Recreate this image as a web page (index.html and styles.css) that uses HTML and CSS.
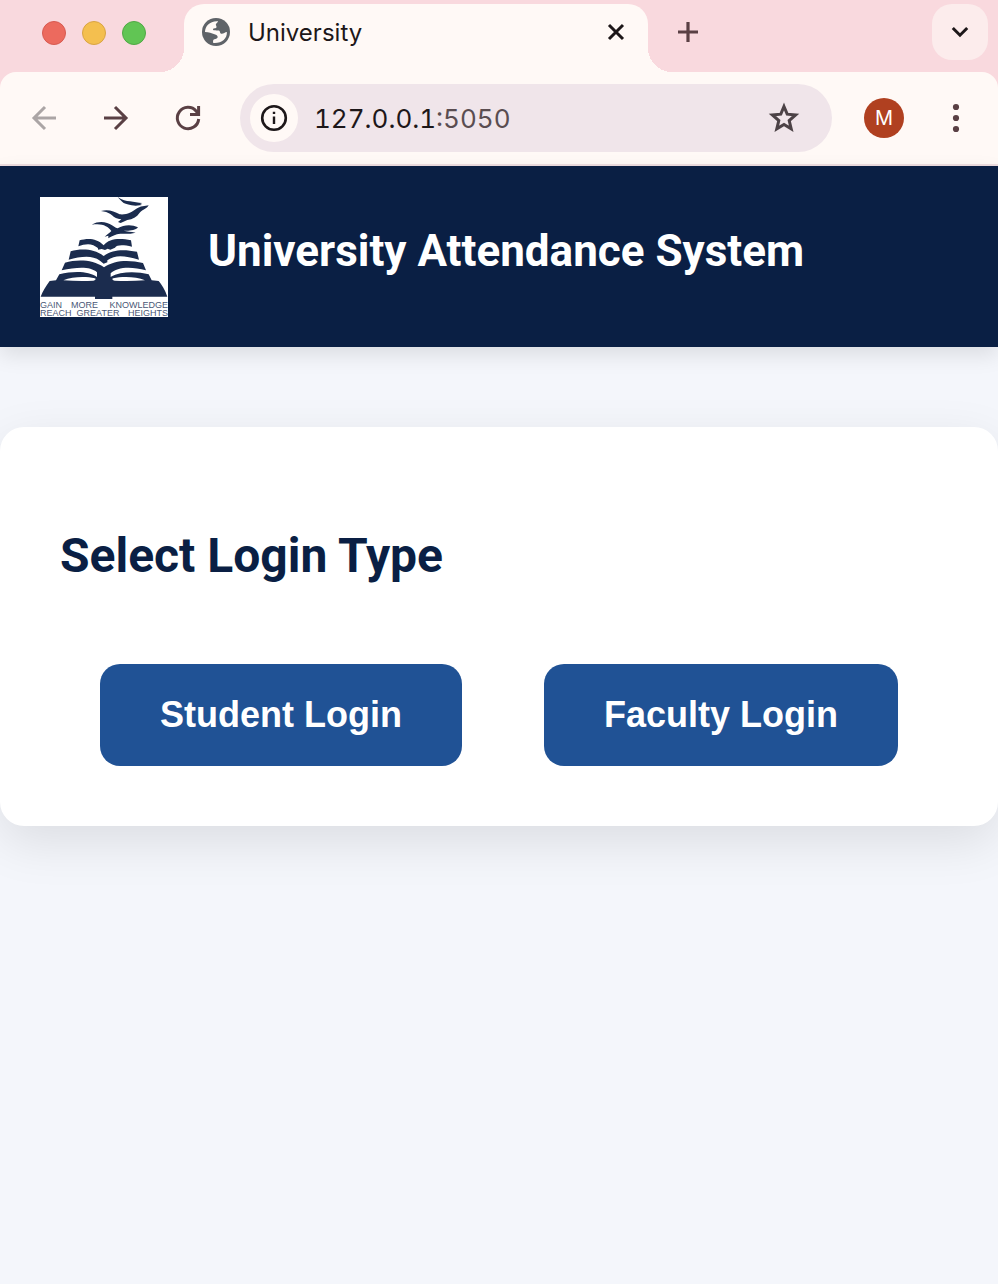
FILE: index.html
```html
<!DOCTYPE html>
<html lang="en">
<head>
<meta charset="utf-8">
<title>University</title>
<meta name="viewport" content="width=device-width, initial-scale=1">
<link rel="stylesheet" href="styles.css">
</head>
<body>
<div class="browser">
  <div class="tab-strip">
    <div class="lights"><span class="light light-close"></span><span class="light light-min"></span><span class="light light-max"></span></div>
    <div class="tab">
      <svg class="globe" viewBox="0 0 28 28" aria-hidden="true"><circle cx="14" cy="14" r="14" fill="#5f6368"/><path fill="#fff9f6" d="M15.500 3.200C17 3.300 15 4.500 14 6c-.7 1.200.8 1.700.5 3.200-.3 1.500-3.500.5-3.500 2.200 0 1.300 4.600.6 5.800 1.100 1.800.7.700 2.700 2.400 3.200 1.800.6 3.600-1.500 5.700-1.700C25.300 20.800 19.500 25.600 11.300 25c-.5-1.200-.2-2.700.2-3.300.8-1.200 3.200-.4 4-2 .8-1.800-1.200-3-3-3.500-3-.8-5.500-2.200-9.500-2.200C3 8 8 2.800 15.500 3.200z"/></svg>
      <span class="tab-title">University</span>
      <button class="plain" aria-label="Close tab"><svg class="icon" viewBox="0 0 32 32"><path d="M9 9 23 23M23 9 9 23" stroke="#1d1719" stroke-width="3"/></svg></button>
    </div>
    <button class="plain new-tab" aria-label="New tab"><svg class="icon" viewBox="0 0 32 32"><path d="M16 6V26M6 16H26" stroke="#5a4044" stroke-width="3.200"/></svg></button>
    <button class="plain tab-search" aria-label="Search tabs"><svg class="icon" viewBox="0 0 32 32"><path d="m8.800 12 7.200 7.200 7.200-7.200" fill="none" stroke="#1d1719" stroke-width="3"/></svg></button>
  </div>
  <div class="toolbar">
    <button class="plain" aria-label="Back"><svg class="icon" viewBox="0 0 32 32"><path d="M28 16H6M17 5 6 16 17 27" fill="none" stroke="#aba5a5" stroke-width="3"/></svg></button>
    <button class="plain" aria-label="Forward"><svg class="icon" viewBox="0 0 32 32"><path d="M4 16H26M15 5 26 16 15 27" fill="none" stroke="#5a4044" stroke-width="3"/></svg></button>
    <button class="plain" aria-label="Reload"><svg class="icon" viewBox="0 0 32 32"><path d="M26.700 17A10.700 10.700 0 1 1 24.300 9.200L26.500 12M26.600 4V12.500H18" fill="none" stroke="#5a4044" stroke-width="3"/></svg></button>
    <div class="omnibox">
      <button class="plain site-info" aria-label="Site information"><svg class="icon" viewBox="0 0 32 32"><circle cx="16" cy="16" r="11.800" fill="none" stroke="#1d1719" stroke-width="2.600"/><path d="M16 14.500V22M16 9.700V12" stroke="#1d1719" stroke-width="2.400"/></svg></button>
      <span class="url">127.0.0.1<span class="port">:5050</span></span>
      <button class="plain" aria-label="Bookmark"><svg class="icon" viewBox="0 0 32 32"><path d="M16 4.500 19.200 12.200 27.600 12.900 21.200 18.500 23.200 26.800 16 22.400 8.800 26.800 10.800 18.500 4.400 12.900 12.800 12.200Z" fill="none" stroke="#4c4246" stroke-width="3"/></svg></button>
    </div>
    <button class="plain avatar" aria-label="Profile">M</button>
    <button class="plain" aria-label="Menu"><svg class="icon" viewBox="0 0 32 32" fill="#5a4044"><circle cx="16" cy="5" r="3.100"/><circle cx="16" cy="16" r="3.100"/><circle cx="16" cy="27" r="3.100"/></svg></button>
  </div>
</div>
<header class="site-header">
  <svg class="logo" viewBox="0 0 128 120" role="img" aria-label="Gain more knowledge, reach greater heights">
    <rect width="128" height="120" fill="#fff"/>
    <g transform="scale(.33333)" fill="#1b2c4e">
      <path d="M233 0C247 9 258 13 270 13C282 14 294 18 307 18L300 21L306 24L287 26C269 25 258 20 251 18C245 13 239 8 233 0Z"/>
      <path d="M183 42C205 36 222 43 239 52C261 54 275 46 288 36C301 27 315 27 326 25C320 36 309 37 299 47C290 60 278 67 262 69L242 78L234 75L244 67C226 65 219 57 211 51C204 46 194 43 183 42Z"/>
      <path d="M155 83C178 70 201 75 216 85C225 91 229 94 233 94C252 83 275 82 294 91C286 101 266 102 251 101C261 103 272 104 287 107C265 113 247 108 231 112C220 117 211 119 205 124L205 116L194 119C202 111 210 107 214 102C203 87 187 78 155 83Z"/>
      <path d="M119 130C139 124 169 121 191 145C207 124 239 123 273 130L276 149C249 143 231 143 225 152L211 158L203 155L195 159L185 156L174 158C177 152 166 149 160 145C145 139 131 143 115 148Z"/>
      <path d="M92 163C122 155 160 154 191 177C220 156 252 157 291 164L297 188C256 177 228 171 202 190L202 196L191 200L180 191C155 173 121 179 86 188Z"/>
      <path d="M75 197C111 187 158 187 192 211C223 188 269 188 309 198L318 220C273 207 230 210 212 229V244H171V226C150 207 109 211 65 220Z"/>
      <path d="M58 232C103 221 147 223 171 240H211C243 222 291 223 326 232L335 250L356 252C365 263 376 279 382 299H217V306H165V299H2C9 282 17 268 29 252L48 250Z"/>
      <path fill="#fff" d="M70 250C98 238 140 238 164 244C170 246 166 250 160 251C130 253 100 252 70 250ZM315 250C288 238 245 238 220 244C214 246 218 250 224 251C254 253 285 252 315 250Z"/>
    </g>
    <g class="motto"><text x="0" y="111">GAIN</text><text x="31" y="111">MORE</text><text x="128" y="111" text-anchor="end">KNOWLEDGE</text><text x="0" y="119">REACH</text><text x="58" y="119" text-anchor="middle">GREATER</text><text x="128" y="119" text-anchor="end">HEIGHTS</text></g>
  </svg>
  <h1>University Attendance System</h1>
</header>
<main class="card">
  <h2>Select Login Type</h2>
  <div class="actions"><button class="login">Student Login</button><button class="login">Faculty Login</button></div>
</main>
</body>
</html>
```
FILE: styles.css
```css
* { box-sizing: border-box; }
body { margin: 0; min-height: 100vh; background: #f4f6fb; font-family: Roboto, sans-serif; }
.browser { font-family: Inter, sans-serif; background: #f9d9de; border-bottom: 2px solid #eedde0; }
.plain { display: flex; align-items: center; justify-content: center; padding: 0; border: 0; background: none; font: inherit; cursor: pointer; }
.icon { display: block; width: 32px; height: 32px; }
.tab-strip { display: flex; align-items: flex-start; height: 72px; padding: 4px 10px 0 42px; }
.lights { display: flex; gap: 16px; width: 142px; padding-top: 17px; }
.light { width: 24px; height: 24px; border-radius: 50%; border: 1px solid; }
.light-close { background: #ec6a5e; border-color: #d75a50; }
.light-min { background: #f4bf4f; border-color: #d9a443; }
.light-max { background: #61c554; border-color: #50a845; }
.tab { position: relative; display: flex; align-items: center; width: 464px; height: 68px; padding: 0 16px 12px 18px; border-radius: 20px 20px 0 0; background: #fff9f6; }
.tab::before, .tab::after { content: ""; position: absolute; bottom: 0; width: 24px; height: 24px; }
.tab::before { right: 100%; background: radial-gradient(circle at 0 0, transparent 24px, #fff9f6 24px); }
.tab::after { left: 100%; background: radial-gradient(circle at 100% 0, transparent 24px, #fff9f6 24px); }
.globe { width: 28px; height: 28px; }
.tab-title { flex: 1; margin-left: 18px; font-size: 24px; color: #1d1719; }
.new-tab { width: 56px; height: 56px; margin-left: 12px; }
.tab-search { width: 56px; height: 56px; margin-left: auto; border-radius: 20px; background: #fcecec; }
.toolbar { display: flex; align-items: center; gap: 40px; height: 92px; padding: 0 26px 0 28px; border-radius: 16px 16px 0 0; background: #fff9f6; }
.omnibox { display: flex; flex: 1; align-items: center; height: 68px; padding: 0 32px 0 10px; margin: 0 -8px 0 -4px; border-radius: 34px; background: #f0e5ea; }
.site-info { width: 48px; height: 48px; border-radius: 50%; background: #fff9f6; }
.url { flex: 1; margin-left: 16px; font-size: 26px; font-variant-numeric: tabular-nums; color: #1d1719; }
.port { color: #5a4d51; }
.avatar { width: 40px; height: 40px; border-radius: 50%; background: #b04020; color: #fff; font-size: 20px; margin-right: -4px; }
.site-header { display: flex; align-items: center; gap: 40px; padding: 31px 40px 30px; background: #0a1f44; box-shadow: 0 8px 20px rgba(0, 0, 0, .1); }
.logo { flex: none; width: 128px; height: 120px; }
.motto { font: 9px "Liberation Sans", sans-serif; fill: #4a5876; }
h1 { margin: 0 0 12px; font-size: 44px; line-height: 52px; color: #fff; }
.card { margin-top: 80px; padding: 100px 60px 60px; border-radius: 24px; background: #fff; box-shadow: 0 16px 50px rgba(0, 0, 0, .1); }
h2 { margin: 0 0 80px; font-size: 48px; line-height: 57px; color: #0a1f44; }
.actions { display: flex; flex-wrap: wrap; justify-content: center; gap: 82px; }
.login { padding: 30px 60px; border: 0; border-radius: 20px; background: #205295; color: #fff; font: bold 36px/42px "Liberation Sans", sans-serif; cursor: pointer; }
```
